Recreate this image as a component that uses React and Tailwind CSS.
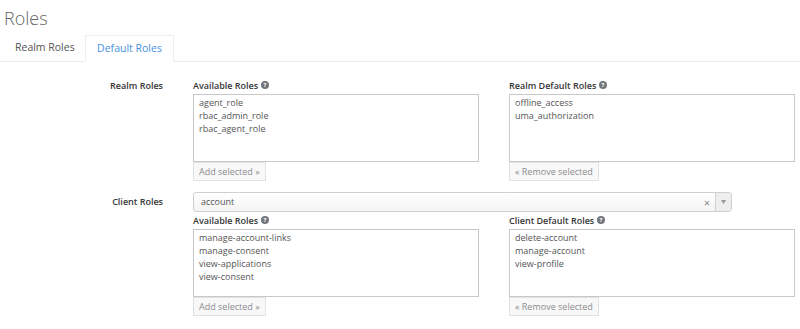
import React from "react";

const Help = () => (
  <svg width="8" height="8" viewBox="0 0 16 16" className="inline-block ml-[3px] align-[-0px]">
    <circle cx="8" cy="8" r="8" fill="#72767b" />
    <text x="8" y="12.5" textAnchor="middle" fontSize="12" fontWeight="700" fill="#fff" fontFamily="'Open Sans', sans-serif">?</text>
  </svg>
);

function RoleList({ title, items, button }) {
  return (
    <div className="w-[286px]">
      <div className="h-[15px] text-[9px] font-semibold text-[#363636] leading-[15px] mb-[1px]">
        {title}
        <Help />
      </div>
      <div className="h-[68px] border border-[#c8c8c8] bg-white px-[5px] pt-[1px] text-[9px] leading-[13px] text-[#555]">
        {items.map((i) => (
          <div key={i}>{i}</div>
        ))}
      </div>
      <button className="block h-[19px] border border-[#e2e2e2] bg-[#f8f8f8] px-[5px] text-[9px] text-[#8b8d8f] leading-[17px]">
        {button}
      </button>
    </div>
  );
}

export default function App() {
  return (
    <div className="w-[800px] h-[329px] bg-white overflow-hidden" style={{ fontFamily: "'Open Sans', sans-serif" }}>
      <div className="pl-[4px] pt-[4px] h-[35px] text-[18px] font-light text-[#666] leading-[28px]">Roles</div>
      <div className="flex border-b border-[#ededed] h-[27px] text-[10.5px]">
        <div className="w-[85px] pl-[15px] leading-[25px] text-[#555]">Realm Roles</div>
        <div className="w-[89px] -mb-px border border-b-white border-[#ededed] bg-white text-center leading-[25px] text-[#4a90e2]">
          Default Roles
        </div>
      </div>
      <div className="pt-[16px]">
        <div className="flex">
          <div className="w-[163px] text-right text-[9px] font-semibold text-[#363636] leading-[15px]">Realm Roles</div>
          <div className="ml-[30px] flex gap-[30px]">
            <RoleList title="Available Roles" items={["agent_role", "rbac_admin_role", "rbac_agent_role"]} button="Add selected »" />
            <RoleList title="Realm Default Roles" items={["offline_access", "uma_authorization"]} button="« Remove selected" />
          </div>
        </div>
        <div className="flex mt-[11px]">
          <div className="w-[163px] text-right text-[9px] font-semibold text-[#363636] leading-[15px] pt-[2px]">Client Roles</div>
          <div className="ml-[30px]">
            <div className="w-[539px] h-[20px] flex items-center border border-[#d0d0d0] rounded-[3px] bg-gradient-to-b from-white to-[#f4f4f4] text-[9px] text-[#555]">
              <div className="flex-1 pl-[7px]">account</div>
              <div className="w-[16px] text-center text-[11px] text-[#888] leading-none">×</div>
              <div className="w-[16px] h-full border-l border-[#d0d0d0] flex items-center justify-center bg-[#eee] rounded-r-[3px]">
                <svg width="5" height="4" viewBox="0 0 5 4"><path d="M0 0H5L2.5 4Z" fill="#999" /></svg>
              </div>
            </div>
            <div className="flex gap-[30px] mt-[1px]">
              <RoleList title="Available Roles" items={["manage-account-links", "manage-consent", "view-applications", "view-consent"]} button="Add selected »" />
              <RoleList title="Client Default Roles" items={["delete-account", "manage-account", "view-profile"]} button="« Remove selected" />
            </div>
          </div>
        </div>
      </div>
    </div>
  );
}
